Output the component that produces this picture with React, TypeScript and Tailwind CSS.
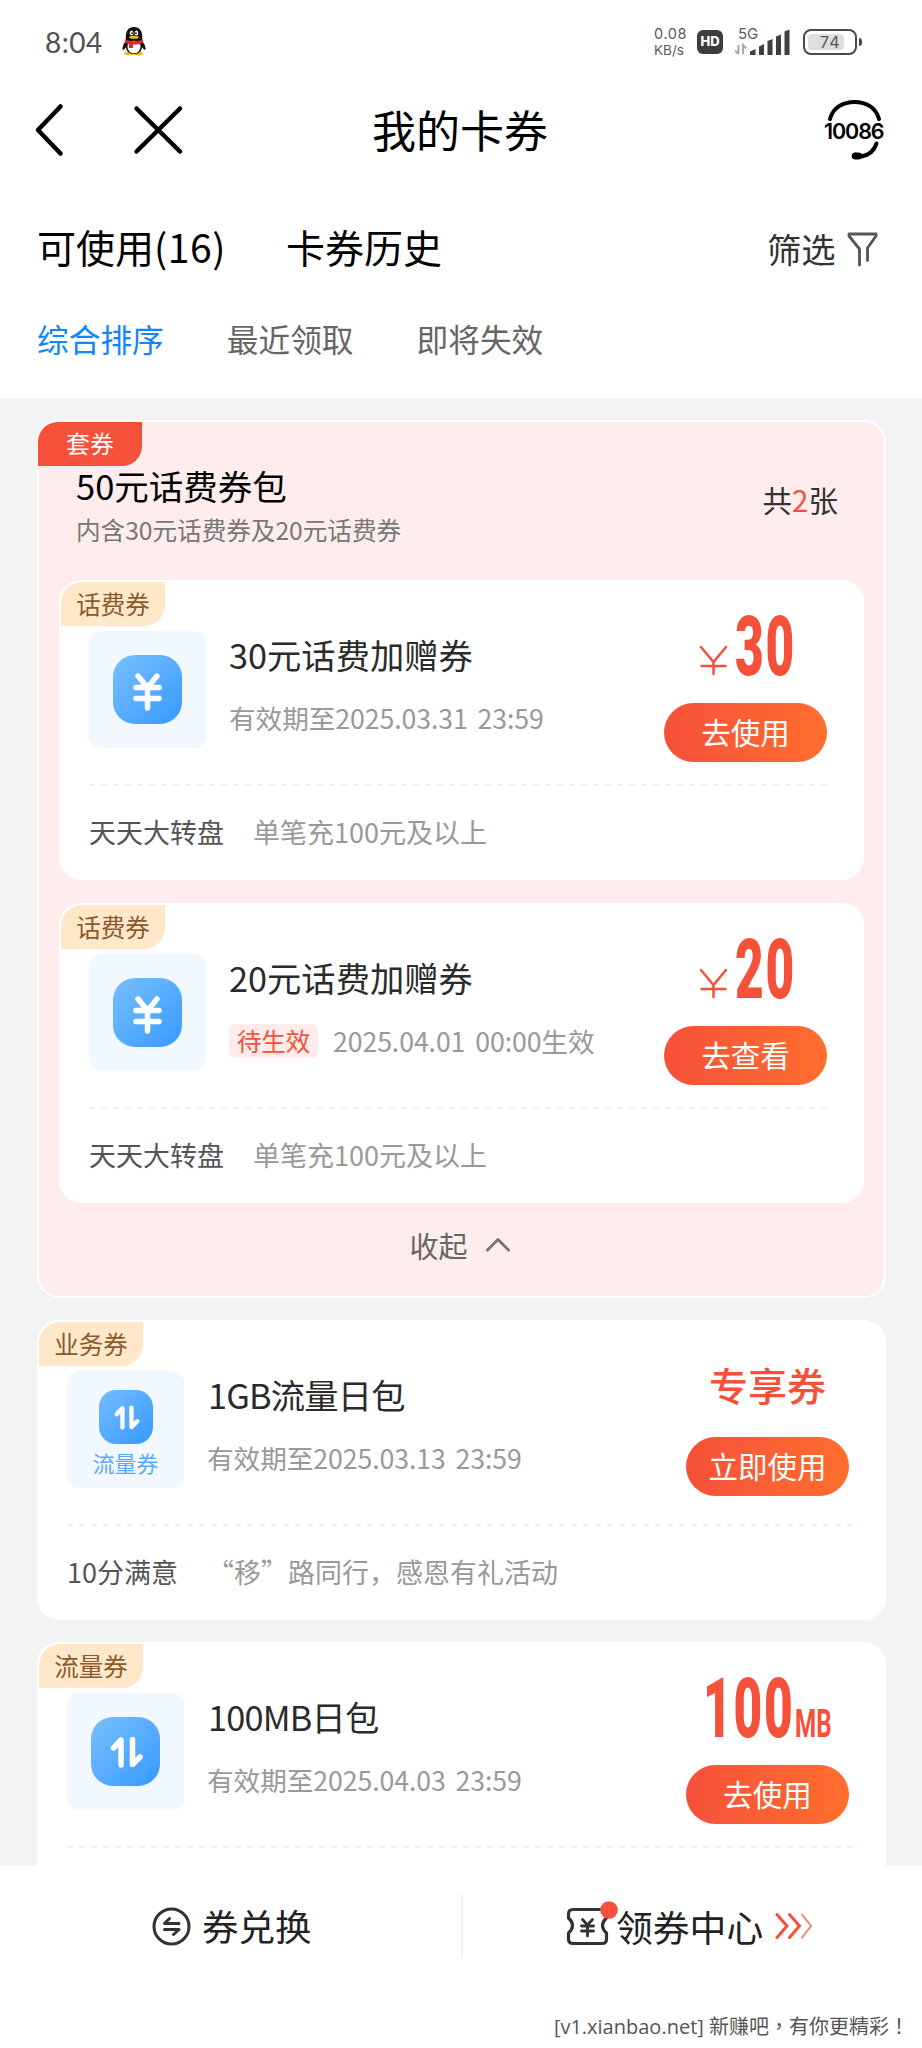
import type { ReactNode } from 'react'

type Coupon = {
  id: string
  tag: string
  icon: 'yen' | 'data'
  iconLabel?: string
  title: string
  badge?: string
  date: string
  amount?: string
  unit?: string
  special?: string
  button: string
  source?: string
  note?: string
}

const bundle: Coupon[] = [
  {
    id: 'fee30',
    tag: '话费券',
    icon: 'yen',
    title: '30元话费加赠券',
    date: '有效期至2025.03.31 23:59',
    amount: '30',
    button: '去使用',
    source: '天天大转盘',
    note: '单笔充100元及以上',
  },
  {
    id: 'fee20',
    tag: '话费券',
    icon: 'yen',
    title: '20元话费加赠券',
    badge: '待生效',
    date: '2025.04.01 00:00生效',
    amount: '20',
    button: '去查看',
    source: '天天大转盘',
    note: '单笔充100元及以上',
  },
]

const coupons: Coupon[] = [
  {
    id: 'data1g',
    tag: '业务券',
    icon: 'data',
    iconLabel: '流量券',
    title: '1GB流量日包',
    date: '有效期至2025.03.13 23:59',
    special: '专享券',
    button: '立即使用',
    source: '10分满意',
    note: '“移”路同行，感恩有礼活动',
  },
  {
    id: 'data100m',
    tag: '流量券',
    icon: 'data',
    title: '100MB日包',
    date: '有效期至2025.04.03 23:59',
    amount: '100',
    unit: 'MB',
    button: '去使用',
  },
]

function Penguin() {
  return (
    <svg className="-mt-[2px]" width="24" height="29" viewBox="0 0 24 29">
      <ellipse cx="7" cy="26.5" rx="5" ry="1.8" fill="#f5b81c" />
      <ellipse cx="16" cy="26.5" rx="5" ry="1.8" fill="#f5b81c" />
      <path d="M4 14 Q0 18 .6 23 Q2 23.5 4 20ZM20 14Q24 18 23.4 23Q22 23.5 20 20Z" fill="#111" />
      <path d="M12 0C6.500 0 3.800 4 3.800 9.500V19C3.800 24 7 27 12 27s8.200-3 8.200-8V9.500C20.200 4 17.500 0 12 0Z" fill="#111" />
      <ellipse cx="12" cy="20" rx="6.500" ry="6.300" fill="#fff" />
      <ellipse cx="9.600" cy="6" rx="1.900" ry="2.600" fill="#fff" />
      <ellipse cx="14.400" cy="6" rx="1.900" ry="2.600" fill="#fff" />
      <circle cx="10.200" cy="6.200" r=".9" fill="#111" />
      <circle cx="13.900" cy="6.200" r=".9" fill="#111" />
      <ellipse cx="12" cy="10.200" rx="4.800" ry="1.500" fill="#f5b81c" />
      <path d="M3 12.500Q12 16 21 12.500V16Q16 18 11 17.500V21H7V17Q4 16.500 3 15.500Z" fill="#e6252b" />
    </svg>
  )
}

function StatusBar() {
  return (
    <div className="flex h-[84px] shrink-0 items-center pl-[45px]">
      <span className="w-[77px] font-['Lato'] text-[28px] leading-none tracking-[0.5px] text-[#505050]">8:04</span>
      <Penguin />
      <div className="ml-[508px] w-[42px] font-['Inter'] text-[14.5px] leading-[16px] text-[#5a5a5a]">
        <div className="tracking-[0.6px]">0.08</div>
        <div className="text-[13.500px]">KB/s</div>
      </div>
      <div className="ml-px flex h-6 w-[26px] items-center justify-center rounded-[6px] bg-[#3d3d3d] font-['Inter'] text-[13px] font-extrabold text-white">
        HD
      </div>
      <div className="relative ml-[11px] h-[30px] w-[58px]">
        <svg width="58" height="30" viewBox="0 0 58 30">
          <path d="M4.500 18V27M1 23.500L4.500 27M9 27V18L12.500 21.500" stroke="#aaa" strokeWidth="2" fill="none" />
          <path d="M16 28V24.500L21.500 22V28ZM25 28V19.500L30 17V28ZM33.500 28V14L38.500 12V28ZM42 28V9.500L47 7.500V28ZM50.500 28V4.500L55.500 2.500V28Z" fill="#3f3f3f" />
        </svg>
        <span className="absolute -top-[1px] left-[4px] font-['Inter'] text-[15px] leading-[16px] text-[#5a5a5a]">5G</span>
      </div>
      <div className="ml-[11px] flex h-[26px] w-[54px] rounded-[8px] border-2 border-[#4a4a4a] p-[3px]">
        <div className="flex w-9 items-center rounded-[4px] bg-[#dedede] pl-3 font-['Inter'] text-[16px] tracking-[1px] text-[#555]">
          74
        </div>
      </div>
      <div className="ml-[2px] h-2 w-[3px] rounded-r bg-[#4a4a4a]" />
    </div>
  )
}

function NavBar() {
  return (
    <div className="flex h-[92px] shrink-0 items-center">
      <svg className="ml-[33px]" width="32" height="54" viewBox="0 0 32 54" fill="none" stroke="#000" strokeWidth="4.500" strokeLinecap="round" strokeLinejoin="round">
        <path d="M27.500 3.500L5 27L27.500 50.500" />
      </svg>
      <svg className="ml-[67px]" width="52" height="52" viewBox="0 0 52 52" fill="none" stroke="#000" strokeWidth="4.500" strokeLinecap="round">
        <path d="M4.500 4.500L48 47.500M48 4.500L4.500 47.500" />
      </svg>
      <h1 className="-mt-[2px] ml-[188px] w-[177px] text-[44px] leading-[60px] text-black">我的卡券</h1>
      <div className="relative ml-[272px] h-[66px] w-[66px]">
        <svg width="66" height="66" viewBox="0 0 66 66" fill="none" stroke="#000" strokeWidth="4" strokeLinecap="round">
          <path d="M9 22C12 10.500 22 5 33.500 5S55 10.500 58 22" />
          <path d="M55.500 46.500C53 54 47 58.500 40 59.500" />
          <rect x="31" y="56" width="10" height="6" rx="3" fill="#000" strokeWidth="1" />
        </svg>
        <span className="absolute top-[20px] left-[3px] font-['Inter'] text-[21.500px] leading-[28px] font-semibold tracking-[-1.100px] text-black">10086</span>
      </div>
    </div>
  )
}

function YenIcon() {
  return (
    <svg width="69" height="69" viewBox="0 0 69 69" fill="none" stroke="#fff" strokeWidth="5.500" strokeLinecap="round" strokeLinejoin="round">
      <path d="M25 21L34.500 32.500L44 21M34.500 32.500V53M23 32.500H46M23 43.500H46" />
    </svg>
  )
}

function DataIcon({ small }: { small?: boolean }) {
  const size = small ? 54 : 69
  return (
    <svg width={size} height={size} viewBox="0 0 69 69" fill="none" stroke="#fff" strokeWidth="5.500" strokeLinecap="round" strokeLinejoin="round">
      <path d="M22.500 31L30 23V48M41.500 22.500V47.500L49 40" />
    </svg>
  )
}

function CouponTile({ coupon }: { coupon: Coupon }) {
  return (
    <div className="mt-[51px] flex h-[117px] w-[117px] shrink-0 flex-col items-center justify-center rounded-[12px] bg-[#f1f8ff]">
      <div
        className={
          coupon.iconLabel
            ? 'mt-[8px] h-[54px] w-[54px] rounded-[17px] bg-linear-to-br from-[#73bdff] to-[#3399ff]'
            : 'h-[69px] w-[69px] rounded-[22px] bg-linear-to-br from-[#78c0ff] to-[#3399ff]'
        }
      >
        {coupon.icon === 'yen' ? <YenIcon /> : <DataIcon small={!!coupon.iconLabel} />}
      </div>
      {coupon.iconLabel && <span className="mt-[4px] text-[21.800px] leading-[30px] text-[#5aa9fa]">{coupon.iconLabel}</span>}
    </div>
  )
}

function Price({ coupon }: { coupon: Coupon }) {
  if (coupon.special) {
    return <div className="h-[117px] pt-[36px] text-center text-[39px] leading-[56px] font-medium text-[#f5503a]">{coupon.special}</div>
  }
  return (
    <div className="flex h-[123px] items-end justify-center pb-[27px] text-[#f5503a]">
      {!coupon.unit && (
        <svg className="mr-[7px] ml-[4px]" width="29" height="31" viewBox="0 0 29 31" fill="none" stroke="currentColor" strokeWidth="2.500" strokeLinecap="round">
          <path d="M2 2L14.500 17L27 2M14.500 17V29M2.500 21H26.500" />
        </svg>
      )}
      <div className={coupon.unit ? 'h-[60px] w-[92px]' : 'h-[60px] w-[62px]'}>
        <span className="inline-block w-0 origin-left scale-x-[0.59] font-['Roboto'] text-[84px] leading-[62px] font-black tracking-[3px]">
          {coupon.amount}
        </span>
      </div>
      {coupon.unit && (
        <div className="h-[29px] w-[37px]">
          <span className="inline-block w-0 origin-left scale-x-[0.62] font-['Roboto'] text-[39px] leading-[30px] font-bold">
            {coupon.unit}
          </span>
        </div>
      )}
    </div>
  )
}

function Card({ coupon }: { coupon: Coupon }) {
  const latin = coupon.icon === 'data'
  return (
    <div className="relative h-[300px] shrink-0 rounded-[22px] bg-white pr-[26px] pl-[30px]">
      <div className="absolute top-[2px] left-[2px] flex h-[44px] w-[104px] items-center justify-center rounded-tl-[21px] rounded-br-[21px] bg-[#ffe7ca] text-[24.500px] text-[#8d5a2b]">
        {coupon.tag}
      </div>
      <div className="flex h-[204px]">
        <CouponTile coupon={coupon} />
        <div className="flex flex-1 flex-col pt-[50px] pl-[23px]">
          <div className={latin ? 'pl-[1px] text-[34.300px] leading-[48px] tracking-[-0.800px] text-[#2b2b2b]' : 'text-[34.300px] leading-[48px] text-[#2b2b2b]'}>
            {coupon.title}
          </div>
          <div className="mt-[20px] flex items-center text-[26.700px] leading-[40px] tracking-[-0.100px] text-[#999] [word-spacing:4px]">
            {coupon.badge && (
              <span className="mr-[15px] flex h-[34px] w-[89px] items-center justify-center rounded-[6px] bg-[#ffebea] text-[24.500px] text-[#f5503a]">
                {coupon.badge}
              </span>
            )}
            {coupon.date}
          </div>
        </div>
        <div className="mr-[11px] w-[163px]">
          <Price coupon={coupon} />
          <button className="flex h-[59px] w-full items-center justify-center rounded-full bg-linear-to-r from-[#f5503a] to-[#ff6e2d] pb-[3px] text-[29.500px] text-white">
            {coupon.button}
          </button>
        </div>
      </div>
      <div className={latin ? '' : 'pr-[6px]'}>
        <svg className="block" width="100%" height="2">
          <line x1="0" y1="1" x2="100%" y2="1" stroke="#efefef" strokeWidth="2" strokeDasharray="6 6" />
        </svg>
      </div>
      {coupon.source && (
        <div className="flex pt-[26px] text-[27px] leading-[40px]">
          <span className="text-[#555]">{coupon.source}</span>
          <span className="ml-[29px] text-[#999]">{coupon.note}</span>
        </div>
      )}
    </div>
  )
}

function Bundle({ children }: { children: ReactNode }) {
  return (
    <section className="relative h-[878px] shrink-0 rounded-[22px] border-2 border-white bg-[#ffecec] px-[20px]">
      <div className="absolute top-0 -left-px flex h-[44px] w-[104px] items-center justify-center rounded-tl-[20px] rounded-br-[20px] bg-[#f5503a] pb-[2px] text-[24px] text-white">
        套券
      </div>
      <div className="flex h-[158px] justify-between pr-[26px] pl-[17px]">
        <div className="pt-[39px]">
          <h2 className="text-[34.500px] leading-[48px] text-black">50元话费券包</h2>
          <p className="mt-[2px] text-[24.600px] leading-[36px] text-[#777]">内含30元话费券及20元话费券</p>
        </div>
        <div className="pt-[56px] text-[29.500px] leading-[42px] text-[#333]">
          共<span className="text-[#f5503a]">2</span>张
        </div>
      </div>
      <div className="flex flex-col gap-[23px]">{children}</div>
      <div className="flex items-center justify-center pt-[21px] pr-[3px] text-[29px] leading-[42px] text-[#666]">
        收起
        <svg className="ml-[17px]" width="26" height="16" viewBox="0 0 26 16" fill="none" stroke="#777" strokeWidth="3" strokeLinecap="round" strokeLinejoin="round">
          <path d="M2.500 13L13 2.500L23.500 13" />
        </svg>
      </div>
    </section>
  )
}

function BottomBar() {
  return (
    <footer className="z-10 flex h-[182px] shrink-0 flex-col bg-white">
      <div className="flex h-[120px] items-center">
        <div className="flex w-[461px] items-center pl-[152px]">
          <svg width="39" height="39" viewBox="0 0 39 39" fill="none" stroke="#333" strokeLinecap="round" strokeLinejoin="round">
            <circle cx="19.500" cy="19.500" r="17.500" strokeWidth="3" />
            <path d="M17.500 11.500L12.500 16.500H27M12.500 22.500H27L21.500 27.500" strokeWidth="3" />
          </svg>
          <span className="ml-[11px] text-[36.500px] leading-[50px] text-[#222]">券兑换</span>
        </div>
        <div className="h-16 w-[2px] bg-[#f2f2f2]" />
        <div className="flex items-center pl-[102px]">
          <svg className="relative -top-[3px] shrink-0" width="54" height="46" viewBox="0 0 54 46" fill="none" stroke="#333" strokeWidth="3.200" strokeLinecap="round" strokeLinejoin="round">
            <path d="M8 9.500H37Q41.500 9.500 41.500 14V18Q37.500 21.500 37.500 25.500T41.500 33V39Q41.500 43.500 37 43.500H8Q3.500 43.500 3.500 39V33Q7.500 29.500 7.500 25.500T3.500 18V14Q3.500 9.500 8 9.500Z" />
            <path d="M17.500 19.500L22.500 25L27.500 19.500M22.500 25V36M16.500 26H28.500M16.500 31H28.500" strokeWidth="2.800" />
            <circle cx="44" cy="10" r="8.800" fill="#f5503a" stroke="none" />
          </svg>
          <span className="-ml-[3px] text-[36.800px] leading-[50px] text-[#222]">领券中心</span>
          <svg className="ml-[12px]" width="38" height="28" viewBox="0 0 38 28" fill="none" stroke="#f5503a" strokeWidth="3" strokeLinecap="round">
            <path d="M2 2.500L12 14L2 25.500" />
            <path d="M14.500 2.500L24.500 14L14.500 25.500" />
            <path d="M27 2.500L36 14L27 25.500" strokeWidth="2" opacity=".7" />
          </svg>
        </div>
      </div>
      <div className="mr-[13px] self-end pt-[27px] font-['Open_Sans','Noto_Sans_CJK_TC',sans-serif] text-[20px] leading-[28px] text-[#555]">
        [v1.xianbao.net] 新赚吧，有你更精彩！
      </div>
    </footer>
  )
}

export default function App() {
  return (
    <div className="flex h-[2048px] w-[922px] flex-col overflow-hidden bg-white font-['Noto_Sans_CJK_SC',sans-serif] whitespace-nowrap">
      <StatusBar />
      <NavBar />
      <div className="flex h-[222px] shrink-0 flex-col">
        <div className="flex items-center pt-[40px] pl-[37px] text-[39px] leading-[56px] text-black">
          <span className="w-[249px]">可使用<span className="tracking-[0.600px]">(16)</span></span>
          <span>卡券历史</span>
          <span className="ml-[325px] pt-[4px] text-[34.300px] text-[#333]">筛选</span>
          <svg className="mt-[6px] ml-[11px]" width="31" height="36" viewBox="0 0 31 36" fill="none" stroke="#555" strokeWidth="2.800" strokeLinecap="round" strokeLinejoin="round">
            <path d="M12.500 34V18L2 5V3H29V5L20.500 17V29.500" />
          </svg>
        </div>
        <div className="flex gap-[63px] pt-[40px] pl-[37px] text-[31.700px] leading-[44px] text-[#666]">
          <span className="text-[#1285fa]">综合排序</span>
          <span>最近领取</span>
          <span>即将失效</span>
        </div>
      </div>
      <main className="flex h-[1468px] shrink-0 flex-col gap-[22px] overflow-hidden bg-[#f3f3f3] pt-[22px] pr-[36px] pl-[37px]">
        <Bundle>
          {bundle.map((c) => (
            <Card key={c.id} coupon={c} />
          ))}
        </Bundle>
        {coupons.map((c) => (
          <Card key={c.id} coupon={c} />
        ))}
      </main>
      <BottomBar />
    </div>
  )
}
